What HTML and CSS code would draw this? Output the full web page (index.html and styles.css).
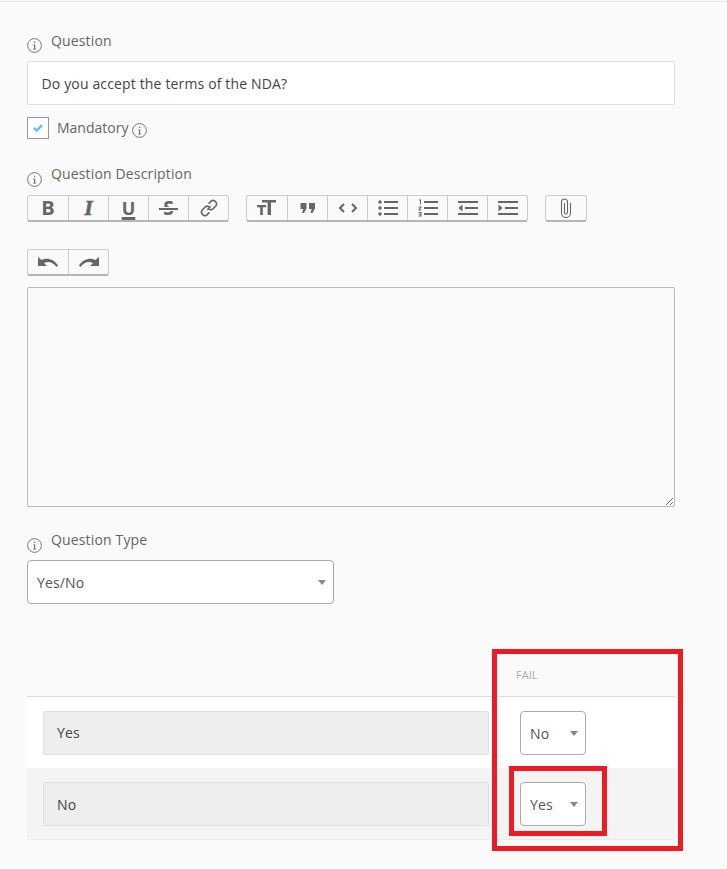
FILE: index.html
```html
<!DOCTYPE html>
<html lang="en">
<head>
<meta charset="utf-8">
<title>Question</title>
<link rel="stylesheet" href="styles.css">
</head>
<body>
<svg class="defs" width="0" height="0" aria-hidden="true">
  <symbol id="info" viewBox="0 0 15 15">
    <circle cx="7.5" cy="7.5" r="6.9" fill="none" stroke="#777" stroke-width="1"/>
    <path d="M6.2 6.4h2v4.3h1v.8H6v-.8h1.1V7.2H6.2zM7 3.7h1.2v1.3H7z" fill="#666"/>
  </symbol>
</svg>
<main class="page">
  <div class="label-row">
    <svg class="info"><use href="#info"/></svg>
    <span class="label">Question</span>
  </div>
  <input class="text-input" type="text" value="Do you accept the terms of the NDA?" readonly>

  <div class="mandatory">
    <span class="checkbox">
      <svg width="10" height="8" viewBox="0 0 10 8"><path d="M1 3.800l2.800 2.700L9 1.200" fill="none" stroke="#6db6f7" stroke-width="2.400"/></svg>
    </span>
    <span class="label">Mandatory</span>
    <svg class="info info-inline"><use href="#info"/></svg>
  </div>

  <div class="label-row desc-label">
    <svg class="info"><use href="#info"/></svg>
    <span class="label">Question Description</span>
  </div>

  <div class="toolbar">
    <div class="group">
      <button class="tb"><span class="g g-b">B</span></button>
      <button class="tb"><span class="g g-i">I</span></button>
      <button class="tb"><span class="g g-u">U</span></button>
      <button class="tb"><span class="g g-s">S</span></button>
      <button class="tb">
        <svg width="20" height="20" viewBox="0 0 20 20" fill="none" stroke="#666" stroke-width="1.6"><path d="M8.3 11.7l3.4-3.4"/><path d="M9.6 5.6l2-2a3 3 0 0 1 4.8 0 3 3 0 0 1 0 4.8l-2.4 2.4a3 3 0 0 1-4.2 0"/><path d="M10.4 14.4l-2 2a3 3 0 0 1-4.8 0 3 3 0 0 1 0-4.8L6 9.200a3 3 0 0 1 4.200 0"/></svg>
      </button>
    </div>
    <div class="group">
      <button class="tb">
        <svg width="20" height="18" viewBox="0 0 20 18" fill="#666"><path d="M5 1h14v2.600h-5V16h-3.400V3.600H5z"/><path d="M0 6h9v2.200H5.800V16H3.200V8.200H0z"/></svg>
      </button>
      <button class="tb">
        <svg width="16" height="12" viewBox="0 0 16 12" fill="#666"><path d="M.5 1h6v5.500L4 11H2l1.200-4H.5zM9 1h6v5.500L12.500 11h-2l1.200-4H9z"/></svg>
      </button>
      <button class="tb">
        <svg width="20" height="12" viewBox="0 0 20 12" fill="none" stroke="#666" stroke-width="2"><path d="M6 2L2 6l4 4M14 2l4 4-4 4"/></svg>
      </button>
      <button class="tb">
        <svg width="20" height="16" viewBox="0 0 20 16" fill="#666"><circle cx="2" cy="2" r="1.800"/><circle cx="2" cy="8" r="1.800"/><circle cx="2" cy="14" r="1.800"/><path d="M6 1h14v2H6zM6 7h14v2H6zM6 13h14v2H6z"/></svg>
      </button>
      <button class="tb">
        <svg width="20" height="18" viewBox="0 0 20 18" fill="#666"><path d="M1 .5h2v5H2V1.500H1zM.500 7.500h3v1l-1.800 2h1.800v1h-3v-1l1.800-2H.500zM.500 13h3v4.500h-3v-1h2v-.800h-1.500v-.900h1.500v-.800h-2z"/><path d="M6 2h14v2H6zM6 8h14v2H6zM6 14h14v2H6z"/></svg>
      </button>
      <button class="tb">
        <svg width="20" height="16" viewBox="0 0 20 16" fill="#666"><path d="M0 1h20v2H0zM7 7h13v2H7zM0 13h20v2H0zM4.500 4.500v7L.500 8z"/></svg>
      </button>
      <button class="tb">
        <svg width="20" height="16" viewBox="0 0 20 16" fill="#666"><path d="M0 1h20v2H0zM7 7h13v2H7zM0 13h20v2H0zM.500 4.500v7l4-3.500z"/></svg>
      </button>
    </div>
    <div class="group">
      <button class="tb tb-only">
        <svg width="12" height="20" viewBox="0 0 12 20" fill="none" stroke="#666" stroke-width="1.100"><path d="M10.500 5v10a4.500 4.500 0 0 1-9 0V4a3 3 0 0 1 6 0v10.500a1.500 1.500 0 0 1-3 0V5"/></svg>
      </button>
    </div>
  </div>

  <div class="group undo">
    <button class="tb">
      <svg width="22" height="12" viewBox="0 0 22 12" fill="#666"><path d="M1 1v9h9L7 7.200C10.500 5 15.500 5.500 19.500 11 20 10.500 20.500 10 21 9.500 16.500 2.500 9.500 1.500 4.500 4z"/></svg>
    </button>
    <button class="tb">
      <svg width="22" height="12" viewBox="0 0 22 12" fill="#666"><path d="M21 1v9h-9l3-2.800C11.500 5 6.500 5.500 2.500 11 2 10.500 1.500 10 1 9.500 5.500 2.500 12.500 1.500 17.500 4z"/></svg>
    </button>
  </div>

  <textarea class="area"></textarea>

  <div class="label-row type-label">
    <svg class="info"><use href="#info"/></svg>
    <span class="label">Question Type</span>
  </div>
  <div class="select select-wide"><span>Yes/No</span><i class="caret"></i></div>

  <section class="answers">
    <div class="answers-head"><span class="fail">Fail</span></div>
    <div class="answer">
      <div class="field field-first">Yes</div>
      <div class="select select-small"><span>No</span><i class="caret"></i></div>
    </div>
    <div class="answer answer-alt">
      <div class="field">No</div>
      <div class="select select-small"><span>Yes</span><i class="caret"></i></div>
    </div>
  </section>
</main>
<div class="mark mark-outer"></div>
<div class="mark mark-inner"></div>
</body>
</html>
```
FILE: styles.css
```css
* { box-sizing: border-box; }
html, body { margin: 0; padding: 0; }
body {
  position: relative;
  min-height: 869px;
  background: #fafafa;
  font-family: "Open Sans", "Liberation Sans", sans-serif;
  font-size: 14px;
  letter-spacing: .15px;
  color: #444;
  overflow: hidden;
}
.defs { position: absolute; }
.page {
  margin-top: 1px;
  border-top: 1px solid #e6e6e6;
  padding: 29px 52px 0 27px;
}
.label-row {
  display: flex;
  align-items: flex-start;
  gap: 9px;
  height: 22px;
  margin-bottom: 8px;
}
.label { color: #666; line-height: 20px; }
.info { width: 15px; height: 15px; margin-top: 7px; flex: none; }
.text-input {
  display: block;
  width: 100%;
  height: 44px;
  padding: 0 13.5px;
  border: 1px solid #ddd;
  border-radius: 2px;
  background: #fff;
  color: #444;
  font: inherit;
  letter-spacing: inherit;
  outline: none;
}
.mandatory {
  display: flex;
  align-items: flex-start;
  height: 22px;
  margin-top: 12px;
  letter-spacing: 0;
}
.mandatory .label { margin-left: 8px; margin-top: 1px; }
.info-inline { margin-top: 6px; margin-left: 4px; }
.checkbox {
  width: 22px;
  height: 22px;
  display: flex;
  align-items: center;
  justify-content: center;
  background: #fff;
  border: 1px solid #999;
}
.desc-label { margin-top: 25px; margin-bottom: 9px; }
.desc-label .info, .type-label .info { margin-top: 8px; }
.toolbar { display: flex; gap: 17px; }
.group {
  display: inline-flex;
  height: 27px;
  background: #fafafa;
  border: 1px solid #ccc;
  border-bottom: 2px solid #b5b5b5;
  border-radius: 3px;
  vertical-align: top;
}
.tb {
  width: 40px;
  height: 24px;
  padding: 0;
  border: 0;
  border-right: 1px solid #ccc;
  background: transparent;
  display: flex;
  align-items: center;
  justify-content: center;
  font-family: inherit;
}
.tb:first-child { width: 41px; }
.tb:last-child { width: 39px; border-right: 0; }
.tb.tb-only { width: 40px; }
.g { position: relative; color: #666; line-height: 24px; font-weight: 700; letter-spacing: 0; }
.g-b { font-size: 20px; }
.g-i { font-size: 21px; font-style: italic; font-family: "Liberation Serif", serif; -webkit-text-stroke: .7px #666; }
.g-u { font-size: 18px; text-decoration: underline; text-decoration-thickness: 2.5px; text-underline-offset: 2px; }
.g-s { font-size: 19px; }
.g-s::after {
  content: "";
  position: absolute;
  left: -4px;
  right: -4px;
  top: 12px;
  height: 2px;
  background: #666;
  box-shadow: 0 0 0 1px #fafafa;
}
.undo { display: flex; width: 82px; margin-top: 27px; }
.area {
  display: block;
  width: 100%;
  height: 220px;
  margin-top: 11px;
  border: 1px solid #bbb;
  border-radius: 2px;
  background: #fafafa;
  outline: none;
}
.type-label { margin-top: 23px; }
.select {
  display: flex;
  align-items: center;
  justify-content: space-between;
  height: 44px;
  padding: 0 7px 0 9px;
  background: #fff;
  border: 1px solid #aaa;
  border-radius: 4px;
  color: #555;
}
.select-wide { width: 307px; }
.select-small { width: 66px; }
.caret {
  width: 0;
  height: 0;
  border-left: 4px solid transparent;
  border-right: 4px solid transparent;
  border-top: 5px solid #888;
}
.answers { margin-top: 50px; }
.answers-head {
  height: 43px;
  padding: 14px 0 0 489px;
  border-bottom: 1px solid #ddd;
}
.fail {
  display: block;
  font-size: 11px;
  line-height: 14px;
  letter-spacing: 0;
  text-transform: uppercase;
  color: #aaa;
}
.answer {
  display: grid;
  grid-template-columns: 446px 66px;
  column-gap: 31px;
  height: 71px;
  padding: 14px 16px 13px;
  background: #fff;
}
.answer-alt {
  height: 72px;
  background: #f4f4f4;
  border-bottom: 1px solid #ececec;
}
.field {
  display: flex;
  align-items: center;
  padding: 0 13px;
  background: #eee;
  border: 1px solid #e0e0e0;
  border-radius: 2px;
  color: #444;
}
.field-first { padding-bottom: 2px; }
.mark { position: absolute; border: 5px solid #ed1c24; }
.mark-outer { left: 492px; top: 649px; width: 191px; height: 202px; }
.mark-inner { left: 509px; top: 766px; width: 98px; height: 70px; }
```
